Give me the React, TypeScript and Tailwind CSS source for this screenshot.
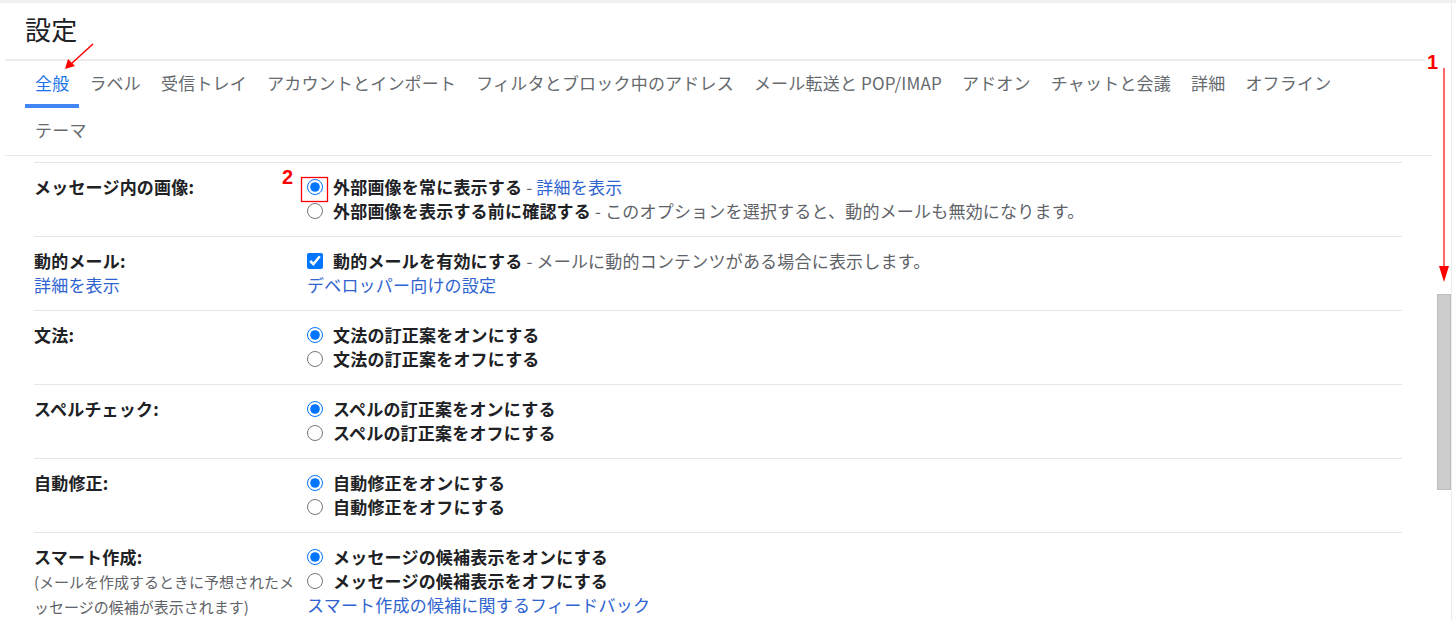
import React from 'react'

const tabs = [
  'ラベル',
  '受信トレイ',
  'アカウントとインポート',
  'フィルタとブロック中のアドレス',
  'メール転送と POP/IMAP',
  'アドオン',
  'チャットと会議',
  '詳細',
  'オフライン',
  'テーマ',
]

type Opt = { label: string; checked?: boolean; desc?: string; link?: string }

function Radio({ o, name, box }: { o: Opt; name: string; box?: boolean }) {
  return (
    <label className="flex items-center h-[24px] whitespace-nowrap">
      <input
        type={box ? 'checkbox' : 'radio'}
        name={name}
        defaultChecked={o.checked}
        className="m-0 w-4 h-4 shrink-0"
      />
      <span className="ml-[10px] font-bold text-[#202124]">{o.label}</span>
      {o.desc && <span className="text-[#5f6368]">&nbsp;- {o.desc}</span>}
      {o.link && (
        <>
          <span className="text-[#5f6368]">&nbsp;-&nbsp;</span>
          <span className="text-[#2f63d0]">{o.link}</span>
        </>
      )}
    </label>
  )
}

function Row({ label, sub, link, children }: { label: string; sub?: React.ReactNode; link?: string; children: React.ReactNode }) {
  return (
    <div className="flex h-[74px] shrink-0 border-t border-[#e6e6e6] pt-[12px]">
      <div className="w-[273px] shrink-0">
        <div className="h-[24px] leading-[24px] font-bold text-[#202124]">{label}</div>
        {link && <div className="h-[24px] leading-[24px] text-[#2f63d0]">{link}</div>}
        {sub && <div className="text-[15px] leading-[25px] tracking-normal text-[#5f6368]">{sub}</div>}
      </div>
      <div className="flex flex-col">{children}</div>
    </div>
  )
}

export default function App() {
  return (
    <div className="relative w-[1456px] h-[620px] overflow-hidden bg-white font-['Noto_Sans_CJK_JP','Noto_Sans',sans-serif] text-[17px] leading-[24px] tracking-[0.2px]">
      <div className="h-[3px] bg-[#f1f1f1]" />
      <div className="flex">
        <div className="w-[1436px] shrink-0 flex flex-col">
          {/* header */}
          <div className="h-[56px] pl-[25px] pt-[10px] text-[26px] leading-[31px] text-[#202124]">設定</div>
          <div className="ml-[5px] w-[1420px] h-[2px] bg-[#ececec]" />

          {/* tabs */}
          <div className="ml-[25px] w-[1360px] flex flex-wrap">
            <div className="h-[47px] px-[10px] flex items-center border-b-4 border-[#4285f4] text-[#1a73e8]">全般</div>
            {tabs.map(t => (
              <div key={t} className="h-[47px] px-[10px] flex items-center border-b-4 border-transparent text-[#666a6e]">{t}</div>
            ))}
          </div>
          <div className="ml-[5px] w-[1427px] h-px bg-[#e8eaed]" />
          <div className="h-[6px]" />

          {/* settings rows */}
          <div className="ml-[34px] w-[1368px] flex flex-col">
            <Row label="メッセージ内の画像:">
              <Radio name="img" o={{ label: '外部画像を常に表示する', checked: true, link: '詳細を表示' }} />
              <Radio name="img" o={{ label: '外部画像を表示する前に確認する', desc: 'このオプションを選択すると、動的メールも無効になります。' }} />
            </Row>
            <Row label="動的メール:" link="詳細を表示">
              <Radio box name="amp" o={{ label: '動的メールを有効にする', checked: true, desc: 'メールに動的コンテンツがある場合に表示します。' }} />
              <div className="h-[24px] text-[#2f63d0]">デベロッパー向けの設定</div>
            </Row>
            <Row label="文法:">
              <Radio name="gr" o={{ label: '文法の訂正案をオンにする', checked: true }} />
              <Radio name="gr" o={{ label: '文法の訂正案をオフにする' }} />
            </Row>
            <Row label="スペルチェック:">
              <Radio name="sp" o={{ label: 'スペルの訂正案をオンにする', checked: true }} />
              <Radio name="sp" o={{ label: 'スペルの訂正案をオフにする' }} />
            </Row>
            <Row label="自動修正:">
              <Radio name="ac" o={{ label: '自動修正をオンにする', checked: true }} />
              <Radio name="ac" o={{ label: '自動修正をオフにする' }} />
            </Row>
            <Row label="スマート作成:" sub={<>(メールを作成するときに予想されたメ<br />ッセージの候補が表示されます)</>}>
              <Radio name="sc" o={{ label: 'メッセージの候補表示をオンにする', checked: true }} />
              <Radio name="sc" o={{ label: 'メッセージの候補表示をオフにする' }} />
              <div className="h-[24px] text-[#2f63d0]">スマート作成の候補に関するフィードバック</div>
            </Row>
          </div>
        </div>

        {/* scrollbar */}
        <div className="w-[16px] h-[617px] border-r border-[#ececec]">
          <div className="mt-[291px] ml-px w-[14px] h-[196px] bg-[#cdcdcd] border border-[#bdbdbd]" />
        </div>
      </div>

      {/* annotations */}
      <svg className="absolute left-0 top-0 pointer-events-none" width="1456" height="620">
        <line x1="93" y1="44" x2="71" y2="64" stroke="#ff0000" strokeWidth="1.5" />
        <polygon points="65,69 68,59 75,66" fill="#ff0000" />
        <line x1="1444" y1="68" x2="1444" y2="270" stroke="#ff3333" strokeWidth="1.5" />
        <polygon points="1439,266 1449,266 1444,282" fill="#ff0000" />
        <rect x="301.5" y="177.5" width="26" height="24" fill="none" stroke="#ff0000" strokeWidth="1.3" />
      </svg>
      <div className="absolute left-[1427px] top-[50px] text-[20px] leading-[24px] font-bold text-[#ff0000] font-['Liberation_Sans',sans-serif]">1</div>
      <div className="absolute left-[282px] top-[165px] text-[20px] leading-[24px] font-bold text-[#ff0000] font-['Liberation_Sans',sans-serif]">2</div>
    </div>
  )
}
